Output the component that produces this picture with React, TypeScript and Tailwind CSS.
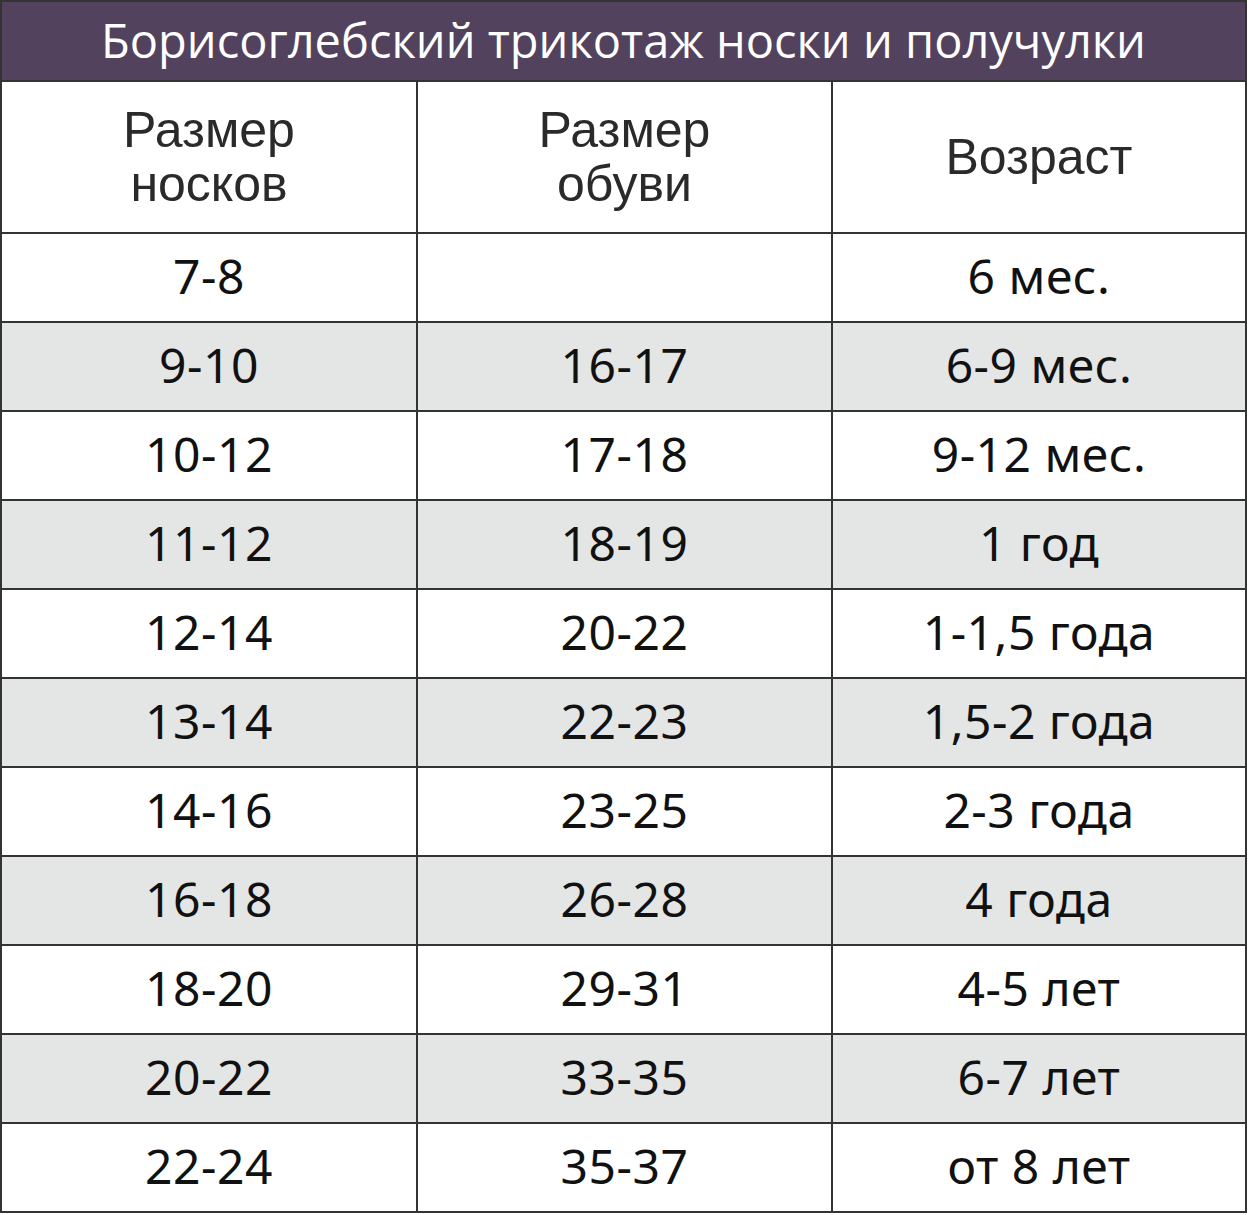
const rows: [string, string, string][] = [
  ["7-8", "", "6 мес."],
  ["9-10", "16-17", "6-9 мес."],
  ["10-12", "17-18", "9-12 мес."],
  ["11-12", "18-19", "1 год"],
  ["12-14", "20-22", "1-1,5 года"],
  ["13-14", "22-23", "1,5-2 года"],
  ["14-16", "23-25", "2-3 года"],
  ["16-18", "26-28", "4 года"],
  ["18-20", "29-31", "4-5 лет"],
  ["20-22", "33-35", "6-7 лет"],
  ["22-24", "35-37", "от 8 лет"],
];

const cols = "grid grid-cols-[414px_415px_414px]";

export default function App() {
  return (
    <div className="w-[1248px] bg-white">
      <div className="w-[1247px] border-2 border-[#333333]">
        {/* title band */}
        <div className="flex h-[78px] items-center justify-center bg-[#52425e] pb-[2px] font-['Open_Sans',sans-serif] text-[47px] text-white">
          Борисоглебский трикотаж носки и получулки
        </div>

        {/* column headings */}
        <div className={`${cols} h-[152px] border-t-2 border-[#333333] font-['Liberation_Sans',Arial,sans-serif] text-[50px] leading-[54px] text-[#2a2a2a]`}>
          <div className="flex items-center justify-center text-center">
            Размер
            <br />
            носков
          </div>
          <div className="flex items-center justify-center border-l-2 border-[#333333] text-center">
            Размер
            <br />
            обуви
          </div>
          <div className="flex items-center justify-center border-l-2 border-[#333333] text-center">
            Возраст
          </div>
        </div>

        {/* body */}
        {rows.map((r, i) => (
          <div
            key={i}
            className={`${cols} h-[89px] border-t-2 border-[#333333] font-['Noto_Sans',sans-serif] text-[48px] tracking-[0.5px] text-[#111111] ${
              i % 2 === 1 ? "bg-[#e4e5e5]" : "bg-white"
            }`}
          >
            <div className="flex items-center justify-center pb-[4px]">{r[0]}</div>
            <div className="flex items-center justify-center border-l-2 border-[#333333] pb-[4px]">{r[1]}</div>
            <div className="flex items-center justify-center border-l-2 border-[#333333] pb-[4px]">{r[2]}</div>
          </div>
        ))}
      </div>
    </div>
  );
}
